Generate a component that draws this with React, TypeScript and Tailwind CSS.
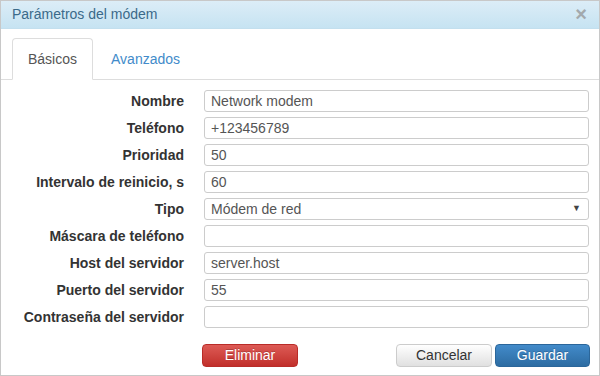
import { useState } from "react";

const fields = [
    { label: "Nombre", value: "Network modem" },
    { label: "Teléfono", value: "+123456789" },
    { label: "Prioridad", value: "50" },
    { label: "Intervalo de reinicio, s", value: "60" },
    { label: "Tipo", value: "Módem de red", select: true },
    { label: "Máscara de teléfono", value: "" },
    { label: "Host del servidor", value: "server.host" },
    { label: "Puerto del servidor", value: "55" },
    { label: "Contraseña del servidor", value: "" },
];

const App = () => {
    const [tab, setTab] = useState("basic");

    return (
        <div className="w-[600px] h-[376px] bg-white border border-[#c8c8c8] font-['Liberation_Sans',Arial,sans-serif] text-[#333] overflow-hidden">
            {/* header */}
            <div className="h-[28px] flex items-center justify-between pl-[11px] pr-[12px] bg-linear-to-b from-[#dcedf7] to-[#c6e3f2] border-b border-[#c3dfee]">
                <span className="text-[14px] text-[#3b6a8a]">Parámetros del módem</span>
                <span className="text-[20px] font-bold leading-none text-[#a3a9ad] -mt-[1px]">×</span>
            </div>

            {/* tabs */}
            <div className="mt-[9px] flex pl-[11px] border-b border-[#ddd] h-[42px]">
                <button
                    onClick={() => setTab("basic")}
                    className={`h-[42px] px-[15px] text-[14px] rounded-t-[4px] border ${tab == "basic" ? "bg-white border-[#ddd] border-b-white text-[#555]" : "border-transparent text-[#428bca]"}`}
                >
                    Básicos
                </button>
                <button
                    onClick={() => setTab("adv")}
                    className={`h-[42px] ml-[2px] px-[15px] text-[14px] rounded-t-[4px] border ${tab == "adv" ? "bg-white border-[#ddd] border-b-white text-[#555]" : "border-transparent text-[#428bca]"}`}
                >
                    Avanzados
                </button>
            </div>

            {/* form */}
            <div className="mt-[10px] grid grid-cols-[183px_385px] gap-x-[20px] gap-y-[5px] items-center">
                {fields.map((f) => (
                    <div key={f.label} className="contents">
                        <label className="text-right text-[14px] font-bold text-[#333]">{f.label}</label>
                        {f.select ? (
                            <div className="h-[22px] flex items-center justify-between pl-[6px] pr-[7px] border border-[#ccc] rounded-[3px] text-[14px] text-[#555]">
                                <span>{f.value}</span>
                                <span className="text-[9px] text-[#444]">▼</span>
                            </div>
                        ) : (
                            <input
                                readOnly
                                defaultValue={f.value}
                                className="h-[22px] w-full px-[6px] border border-[#ccc] rounded-[3px] text-[14px] text-[#555] outline-none"
                            />
                        )}
                    </div>
                ))}
            </div>

            {/* buttons */}
            <div className="mt-[16px] flex pl-[201px] pr-[9px]">
                <button className="h-[23px] w-[96px] rounded-[4px] border border-[#b92c28] bg-linear-to-b from-[#dd5a55] to-[#c12e2a] text-white text-[14px] [text-shadow:0_-1px_0_rgba(0,0,0,0.2)]">
                    Eliminar
                </button>
                <div className="flex-1" />
                <button className="h-[23px] w-[96px] rounded-[4px] border border-[#ccc] bg-linear-to-b from-white to-[#e0e0e0] text-[#333] text-[14px]">
                    Cancelar
                </button>
                <button className="ml-[3px] h-[23px] w-[95px] rounded-[4px] border border-[#2b669a] bg-linear-to-b from-[#428bca] to-[#2d6ca2] text-white text-[14px] [text-shadow:0_-1px_0_rgba(0,0,0,0.2)]">
                    Guardar
                </button>
            </div>
        </div>
    );
};

export default App;
